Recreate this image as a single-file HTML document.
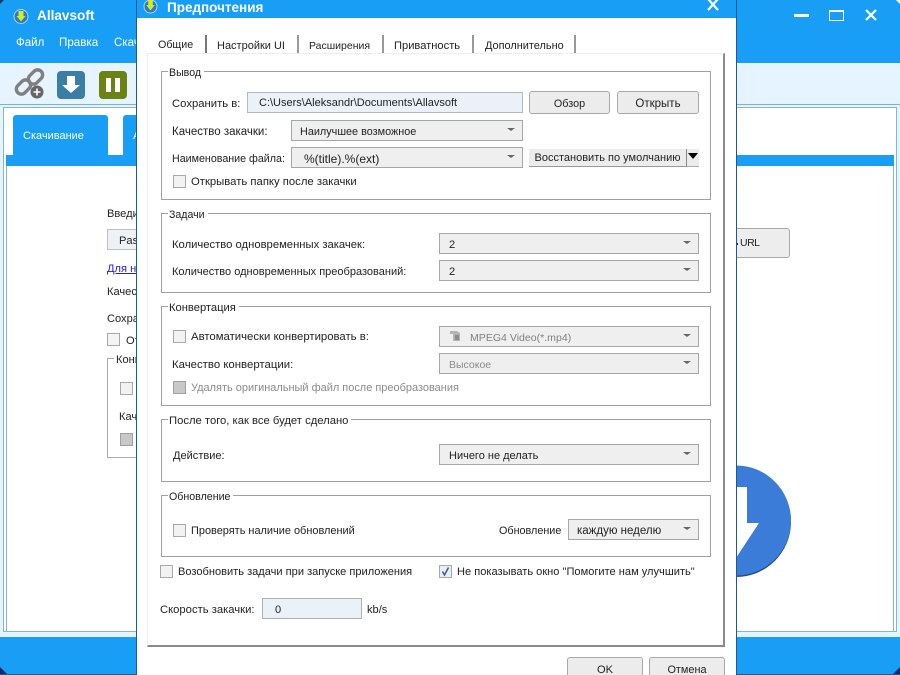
<!DOCTYPE html>
<html><head><meta charset="utf-8"><style>
html,body{margin:0;padding:0;background:#fff}
#r{position:relative;width:900px;height:675px;overflow:hidden;background:#189ef4;font:11.1px "Liberation Sans",sans-serif;color:#222}
#r div{position:absolute;box-sizing:border-box}
.t{white-space:nowrap;line-height:18px;height:18px}
.g{border:1px solid #a0a0a0}
.l{background:#fff;padding:0 3px 0 1px;white-space:nowrap;line-height:16px;height:14px}
.c{width:13px;height:13px;border:1px solid #a8a8a8;background:#f2f2f2}
.cd{background:#c8c8c8;border-color:#a0a0a0}
.s{border:1px solid #a6a6a6;background:#efefef;height:21px;line-height:23px;white-space:nowrap}
.s:after{content:"";position:absolute;right:7px;top:7px;border:4px solid transparent;border-top:3px solid #666;border-bottom:0}
.b{border:1px solid #a8a8a8;border-radius:3px;background:#ececec;text-align:center;line-height:24px;white-space:nowrap}
.d{color:#8a8a8a}
</style></head><body><div id="r">

<!-- main window -->
<div style="left:0;top:63px;width:900px;height:42px;background:#e6f4ff"></div>
<div style="left:0;top:104px;width:900px;height:1px;background:#7fb0d0"></div>
<div style="left:0;top:105px;width:900px;height:532px;background:#e6f4ff"></div>
<div style="left:3px;top:107px;width:894px;height:525px;background:#fff;border:1px solid #7fb8d0"></div>
<div style="left:6px;top:155px;width:888px;height:11px;background:#189ef4"></div>
<div style="left:6px;top:166px;width:888px;height:465px;background:#fff;border-left:1px solid #7fb8d0;border-right:1px solid #7fb8d0"></div>
<div style="left:13px;top:115px;width:95px;height:41px;background:#189ef4;border-radius:3px 3px 0 0"></div>
<div style="left:123px;top:115px;width:20px;height:41px;background:#189ef4;border-radius:3px 0 0 0"></div>
<div class="t" style="left:23px;top:127px;color:#fff;font-size:11px">Скачивание</div>
<div class="t" style="left:133px;top:127px;color:#fff">А</div>

<!-- window frame corners -->
<div style="left:0;top:0;width:4px;height:4px;background:#123a6b;clip-path:polygon(0 0,100% 0,0 100%)"></div>
<div style="left:896px;top:0;width:4px;height:4px;background:#fff;clip-path:polygon(0 0,100% 0,100% 100%)"></div>
<div style="left:0;top:667px;width:8px;height:8px;background:#0e2a6e;clip-path:polygon(0 0,100% 100%,0 100%)"></div>
<div style="left:892px;top:667px;width:8px;height:8px;background:#0e2a6e;clip-path:polygon(100% 0,100% 100%,0 100%)"></div>
<div style="left:0;top:674px;width:900px;height:1px;background:#1c5a96"></div>

<!-- title + menu -->
<svg style="position:absolute;left:13px;top:8px" width="16" height="17" viewBox="0 0 16 17"><circle cx="8" cy="8.5" r="7" fill="#2f78c8" stroke="#a8d4f8" stroke-width="1"/><path d="M5.5 3h5v5h2L8 13.5 3.5 8h2z" fill="#d0ee20"/></svg>
<div class="t" style="left:37px;top:7px;color:#fff;font-weight:bold;font-size:13.6px">Allavsoft</div>
<div class="t" style="left:16px;top:34px;color:#fff;font-size:11.5px">Файл</div>
<div class="t" style="left:59px;top:34px;color:#fff;font-size:11.6px">Правка</div>
<div class="t" style="left:114px;top:34px;color:#fff;font-size:11.5px">Скач</div>
<div style="left:794px;top:14px;width:15px;height:3px;background:#fff"></div>
<div style="left:829px;top:10px;width:15px;height:11px;border:1px solid #fff;border-top:2px solid #fff"></div>
<svg style="position:absolute;left:864px;top:8px" width="14" height="14" viewBox="0 0 14 14"><path d="M2 2L12 12M12 2L2 12" stroke="#fff" stroke-width="2.2"/></svg>

<!-- toolbar icons -->
<svg style="position:absolute;left:14px;top:68px" width="32" height="32" viewBox="0 0 32 32"><g fill="none" stroke="#808080" stroke-width="3.4"><rect x="1.5" y="14" width="16" height="10" rx="5" transform="rotate(-45 9.5 19)"/><rect x="13.5" y="4" width="16" height="10" rx="5" transform="rotate(-45 21.5 9)"/></g><circle cx="23" cy="24" r="6.5" fill="#666"/><path d="M23 20.5v7M19.5 24h7" stroke="#fff" stroke-width="1.6"/></svg>
<div style="left:57px;top:71px;width:28px;height:28px;background:#3a7ea6;border-radius:4px"></div>
<svg style="position:absolute;left:57px;top:71px" width="28" height="28" viewBox="0 0 28 28"><path d="M10 5h8v9h5l-9 8-9-8h5z" fill="#fff"/></svg>
<div style="left:99px;top:71px;width:28px;height:28px;background:#6b8312;border-radius:4px"></div>
<div style="left:106px;top:78px;width:5px;height:14px;background:#fff"></div>
<div style="left:115px;top:78px;width:5px;height:14px;background:#fff"></div>

<!-- main content behind dialog -->
<div class="t" style="left:107px;top:205px">Введи</div>
<div style="left:107px;top:229px;width:40px;height:21px;background:#eef1f5;border:1px solid #c0c0c0"></div>
<div class="t" style="left:119px;top:232px">Pas</div>
<div class="t" style="left:107px;top:260px;color:#2222cc;text-decoration:underline">Для н</div>
<div class="t" style="left:107px;top:283px">Качес</div>
<div class="t" style="left:107px;top:310px">Сохра</div>
<div class="c" style="left:107px;top:333px;background:#f4f4f4">&nbsp;</div>
<div class="t" style="left:126px;top:332px">От</div>
<div style="left:107px;top:358px;width:40px;height:100px;border:1px solid #a8a8a8"></div>
<div class="l" style="left:114px;top:352px;padding:0 2px">Конв</div>
<div class="c" style="left:120px;top:382px">&nbsp;</div>
<div class="t" style="left:119px;top:408px">Кач</div>
<div class="c cd" style="left:120px;top:433px">&nbsp;</div>
<div class="b" style="left:700px;top:228px;width:90px;height:30px;background:#ededed"></div>
<div style="left:736px;top:243px;width:2px;height:2px;background:#223"></div>
<div class="t" style="left:740px;top:234px;font-size:10.5px;letter-spacing:-.5px">URL</div>
<!-- big circle -->
<svg style="position:absolute;left:700px;top:460px" width="100" height="120" viewBox="0 0 100 120"><circle cx="36" cy="62" r="55" fill="#1f4e90"/><circle cx="36" cy="60.5" r="55" fill="#3a7cd8"/></svg>
<svg style="position:absolute;left:736px;top:487px" width="30" height="75" viewBox="0 0 30 75"><path d="M0 0H11V36H23L0 71z" fill="#fff"/></svg>

<!-- dialog -->
<div style="left:136px;top:0;width:601px;height:675px;background:#fff;border-left:1px solid #1c5a96;border-right:1px solid #1c5a96"></div>
<div style="left:137px;top:0;width:599px;height:18px;background:#189ef4"></div>
<svg style="position:absolute;left:143px;top:0" width="15" height="15" viewBox="0 0 15 15"><circle cx="7.5" cy="6.5" r="6.5" fill="#2f78c8" stroke="#a8d4f8" stroke-width="1"/><path d="M5.2 0h4.6v5h2L7.5 10.5 3.2 5h2z" fill="#d0ee20"/></svg>
<div class="t" style="left:167px;top:-1px;color:#fff;font-weight:bold;font-size:13.5px">Предпочтения</div>
<svg style="position:absolute;left:706px;top:0" width="14" height="11" viewBox="0 0 14 11"><path d="M2 -1L12 10M12 -1L2 10" stroke="#fff" stroke-width="2.2"/></svg>

<!-- tab panel -->
<div style="left:147px;top:53px;width:578px;height:594px;background:#fff;border-right:2px solid #8a8a8a;border-bottom:2px solid #8a8a8a;border-left:1px solid #eee;border-top:1px solid #eee"></div>
<div style="left:205px;top:35px;width:2px;height:18px;background:#777"></div>
<div style="left:297px;top:35px;width:2px;height:18px;background:#999"></div>
<div style="left:382px;top:35px;width:2px;height:18px;background:#999"></div>
<div style="left:472px;top:35px;width:2px;height:18px;background:#999"></div>
<div style="left:574px;top:35px;width:2px;height:18px;background:#999"></div>
<div class="t" style="left:158px;top:36px;font-size:10.7px">Общие</div>
<div class="t" style="left:217px;top:37px;font-size:11px">Настройки UI</div>
<div class="t" style="left:309px;top:37px;font-size:10.5px">Расширения</div>
<div class="t" style="left:394px;top:37px;font-size:11.15px">Приватность</div>
<div class="t" style="left:485px;top:37px;font-size:10.95px">Дополнительно</div>

<!-- group: Вывод -->
<div class="g" style="left:161px;top:71px;width:550px;height:129px"></div>
<div class="l" style="left:168px;top:65px;font-size:10.6px">Вывод</div>
<div class="t" style="left:172px;top:95px;font-size:11.3px">Сохранить в:</div>
<div style="left:247px;top:92px;width:276px;height:21px;background:#eaf1f9;border:1px solid #b0b8c0;padding-left:11px;line-height:21px;white-space:nowrap;font-size:11px">C:\Users\Aleksandr\Documents\Allavsoft</div>
<div class="b" style="left:529px;top:91px;width:81px;height:23px;font-size:10.8px">Обзор</div>
<div class="b" style="left:617px;top:91px;width:82px;height:23px;font-size:11.5px">Открыть</div>
<div class="t" style="left:172px;top:123px;font-size:11.5px">Качество закачки:</div>
<div class="s" style="left:291px;top:120px;width:232px;padding-left:8px;font-size:10.85px">Наилучшее возможное</div>
<div class="t" style="left:172px;top:150px;font-size:10.7px">Наименование файла:</div>
<div class="s" style="left:291px;top:147px;width:232px;padding-left:12px;font-size:12px">%(title).%(ext)</div>
<div style="left:529px;top:149px;width:157px;height:18px;background:#ececec;border-bottom:1px solid #999;text-align:center;line-height:19px;white-space:nowrap;font-size:11px">Восстановить по умолчанию</div>
<div style="left:686px;top:149px;width:13px;height:18px;background:#ececec;border-left:1px solid #888;border-bottom:1px solid #aaa"></div>
<div style="left:688px;top:153px;width:0;height:0;border:5px solid transparent;border-top:6px solid #000;border-bottom:0"></div>
<div class="c" style="left:173px;top:175px">&nbsp;</div>
<div class="t" style="left:191px;top:173px;font-size:11.3px">Открывать папку после закачки</div>

<!-- group: Задачи -->
<div class="g" style="left:161px;top:213px;width:550px;height:80px"></div>
<div class="l" style="left:168px;top:207px;font-size:10.6px">Задачи</div>
<div class="t" style="left:172px;top:236px;font-size:11.25px">Количество одновременных закачек:</div>
<div class="s" style="left:439px;top:233px;width:260px;padding-left:9px">2</div>
<div class="t" style="left:172px;top:263px;font-size:11.03px">Количество одновременных преобразований:</div>
<div class="s" style="left:439px;top:260px;width:260px;padding-left:9px">2</div>

<!-- group: Конвертация -->
<div class="g" style="left:161px;top:306px;width:550px;height:100px"></div>
<div class="l" style="left:168px;top:300px;font-size:11.2px">Конвертация</div>
<div class="c" style="left:173px;top:330px">&nbsp;</div>
<div class="t" style="left:191px;top:328px;font-size:11.35px">Автоматически конвертировать в:</div>
<div class="s d" style="left:439px;top:326px;width:260px;padding-left:30px;color:#808080;font-size:10.55px">MPEG4 Video(*.mp4)</div>
<svg style="position:absolute;left:449px;top:329px" width="14" height="14" viewBox="0 0 14 14"><path d="M1 2h7l3 2v8H4V5H1z" fill="#b4b4b4"/><rect x="6" y="6" width="4" height="5" fill="#8c8c8c"/></svg>
<div class="t" style="left:172px;top:356px;font-size:11.4px">Качество конвертации:</div>
<div class="s d" style="left:439px;top:353px;width:260px;padding-left:9px;font-size:10.5px">Высокое</div>
<div class="c cd" style="left:173px;top:381px">&nbsp;</div>
<div class="t d" style="left:191px;top:379px;font-size:10.97px">Удалять оригинальный файл после преобразования</div>

<!-- group: После -->
<div class="g" style="left:161px;top:419px;width:550px;height:63px"></div>
<div class="l" style="left:168px;top:413px;font-size:11.25px">После того, как все будет сделано</div>
<div class="t" style="left:173px;top:447px;font-size:11.05px">Действие:</div>
<div class="s" style="left:439px;top:444px;width:260px;padding-left:9px;font-size:11px">Ничего не делать</div>

<!-- group: Обновление -->
<div class="g" style="left:161px;top:495px;width:550px;height:62px"></div>
<div class="l" style="left:168px;top:489px;font-size:10.65px">Обновление</div>
<div class="c" style="left:173px;top:524px">&nbsp;</div>
<div class="t" style="left:191px;top:522px;font-size:10.95px">Проверять наличие обновлений</div>
<div class="t" style="left:499px;top:522px;font-size:10.8px">Обновление</div>
<div class="s" style="left:568px;top:519px;width:131px;padding-left:8px;font-size:11.5px">каждую неделю</div>

<!-- bottom options -->
<div class="c" style="left:160px;top:565px">&nbsp;</div>
<div class="t" style="left:178px;top:563px;font-size:11.07px">Возобновить задачи при запуске приложения</div>
<div class="c" style="left:439px;top:565px;background:#e8eef6">&nbsp;</div>
<svg style="position:absolute;left:439px;top:565px" width="13" height="13" viewBox="0 0 13 13"><path d="M3.5 6.5L5.5 10L9.5 2.5" fill="none" stroke="#3a5a90" stroke-width="1.5"/></svg>
<div class="t" style="left:457px;top:563px;font-size:11.08px">Не показывать окно "Помогите нам улучшить"</div>
<div class="t" style="left:160px;top:601px;font-size:11.25px">Скорость закачки:</div>
<div style="left:262px;top:598px;width:100px;height:21px;background:#eaf1f9;border:1px solid #b0b0b0;padding-left:12px;line-height:22px">0</div>
<div class="t" style="left:367px;top:601px">kb/s</div>

<!-- footer buttons -->
<div class="b" style="left:567px;top:657px;width:76px;height:24px;line-height:25px">OK</div>
<div class="b" style="left:649px;top:657px;width:76px;height:24px;line-height:25px;font-size:10.9px">Отмена</div>

</div></body></html>
